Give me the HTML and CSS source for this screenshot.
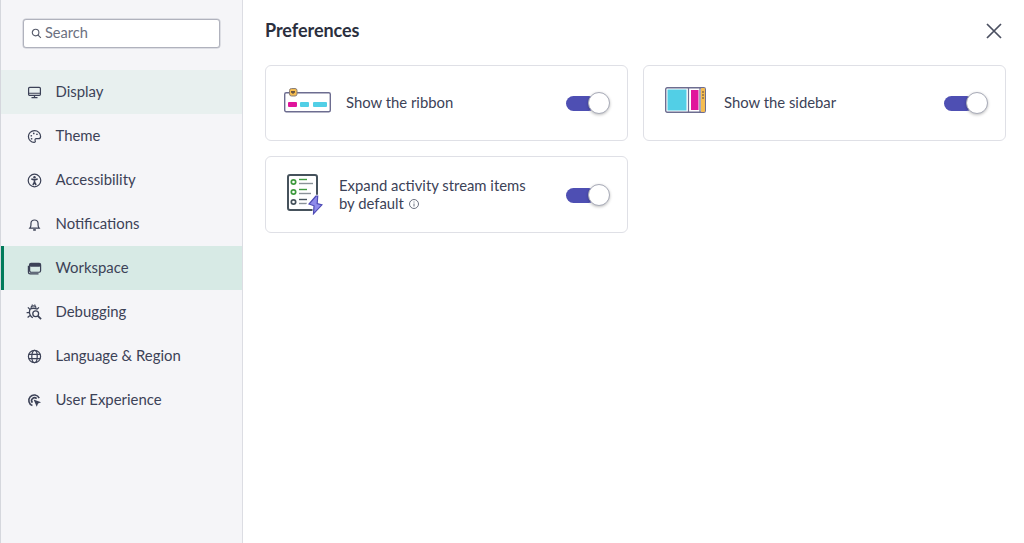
FILE: index.html
```html
<!DOCTYPE html>
<html lang="en">
<head>
    <meta charset="UTF-8">
    <meta name="viewport" content="width=device-width, initial-scale=1.0">
    <title>Preferences</title>
    <link rel="stylesheet" href="styles.css">
</head>
<body>
    <div class="sidebar">
        <div class="search-wrap">
            <div class="search">
                <svg class="search-icon" viewBox="0 0 12 12"><circle cx="5" cy="5" r="3.6"/><path d="M7.7 7.7 10.8 10.8"/></svg>
                <span>Search</span>
            </div>
        </div>
        <div class="nav">
            <div class="nav-item hovered">
                <svg class="nav-icon" viewBox="0 0 16 16"><rect x="1.7" y="2.5" width="12.6" height="8.5" rx="1.2"/><path d="M1.7 8.8h12.6M8 11v2.5M4.8 13.500h6.400"/></svg>
                <span>Display</span>
            </div>
            <div class="nav-item">
                <svg class="nav-icon" viewBox="0 0 16 16"><path d="M8 1.800c-3.600 0-6.500 2.700-6.500 6.200s2.900 6.200 6 6.200c1.300 0 1.700-1 1.200-1.900-.5-1 0-2 1.200-2h2.200c1.400 0 2.400-1 2.400-2.400 0-3.400-2.900-6.100-6.500-6.100z"/><circle class="dot" cx="4.600" cy="7.200" r=".9"/><circle class="dot" cx="7.200" cy="4.700" r=".9"/><circle class="dot" cx="10.600" cy="5.600" r=".9"/><circle class="dot" cx="4.900" cy="10.400" r=".9"/></svg>
                <span>Theme</span>
            </div>
            <div class="nav-item">
                <svg class="nav-icon" viewBox="0 0 16 16"><circle cx="8" cy="8" r="6.700"/><circle class="dot" cx="8" cy="4.500" r="1.300"/><path class="thick" d="M4.600 6.500 8 7.300l3.400-.8M8 7.300v2.500M8 9.800l-1.700 3M8 9.800l1.700 3"/></svg>
                <span>Accessibility</span>
            </div>
            <div class="nav-item">
                <svg class="nav-icon" viewBox="0 0 16 16"><path d="M3 11.800c.8-1 1.200-1.800 1.200-3.300V7a3.800 3.800 0 0 1 7.600 0v1.500c0 1.500.4 2.300 1.200 3.300z"/><path class="thick" d="M6.600 13.800h2.800"/></svg>
                <span>Notifications</span>
            </div>
            <div class="nav-item active">
                <svg class="nav-icon" viewBox="0 0 16 16"><rect class="solid" x="2.800" y="2.500" width="11.700" height="3.500" rx="1.200"/><rect x="2.800" y="2.500" width="11.700" height="9.500" rx="1.500"/><path d="M1.500 5v7c0 1 .8 1.800 1.800 1.800h9"/></svg>
                <span>Workspace</span>
            </div>
            <div class="nav-item">
                <svg class="nav-icon wide" viewBox="0 0 16 16"><path d="M4.800 3.600a3 3 0 0 1 5.400 0"/><path d="M3.900 5.200c1.800-1.300 5.400-1.300 7.200 0M3.900 5.200c-.9 2.900-.5 6.400 2.900 8.600"/><path d="M3.900 5.400 1.900 3.400M3.300 8.600H.6M3.900 11.400l-2.300 2"/><path d="M11.100 5.200l1.800-1.800M6.500 1.700 5.900.7M8.600 1.700l.6-1"/><circle cx="9.700" cy="9.700" r="2.900"/><path class="thick" d="M11.800 11.800l3.300 3.300"/></svg>
                <span>Debugging</span>
            </div>
            <div class="nav-item">
                <svg class="nav-icon" viewBox="0 0 16 16"><circle cx="8" cy="8" r="6.500"/><ellipse cx="8" cy="8" rx="2.900" ry="6.500"/><path d="M1.900 5.800h12.200M1.900 10.200h12.200"/></svg>
                <span>Language &amp; Region</span>
            </div>
            <div class="nav-item">
                <svg class="nav-icon heavy" viewBox="0 0 16 16"><path d="M5.800 13.400A5.800 5.800 0 1 1 13 5.500"/><path d="M5.800 10.300A3.100 3.100 0 1 1 10.300 6"/><path class="solid" d="M7 7l8 2.800-3.200 1.500-1.400 3.300z"/></svg>
                <span>User Experience</span>
            </div>
        </div>
    </div>

    <div class="main">
        <div class="header">
            <h1>Preferences</h1>
            <svg class="close" viewBox="0 0 16 16"><path d="M1 1l14 14M15 1 1 15"/></svg>
        </div>
        <div class="cards">
            <div class="card">
                <svg class="pic" width="47" height="30" viewBox="0 0 47 30">
                    <rect x="0.700" y="4.700" width="45.600" height="19" rx="1.500" fill="#fff" stroke="#6d6d90" stroke-width="1.400"/>
                    <rect x="4" y="14" width="9" height="5" rx="1" fill="#e0159b"/>
                    <rect x="16" y="14" width="9" height="5" rx="1" fill="#52cfe6"/>
                    <rect x="29" y="14" width="14" height="5" rx="1" fill="#52cfe6"/>
                    <rect x="5.500" y="0.500" width="7.500" height="7.500" rx="2" fill="#f6bd50" stroke="#8a7f78"/>
                    <path d="M7 3h4v1.500l-2 1.500-2-1.500z" fill="#6a5540"/>
                </svg>
                <span class="label">Show the ribbon</span>
                <div class="toggle"><div class="knob"></div></div>
            </div>
            <div class="card sidebar-card">
                <svg class="pic" width="41" height="32" viewBox="0 0 41 32">
                    <rect x="0.700" y="0.700" width="39.600" height="24.600" rx="1.500" fill="#fff" stroke="#6d6d90" stroke-width="1.400"/>
                    <rect x="2.500" y="2.500" width="19" height="21" fill="#52cfe6"/>
                    <path d="M23.500 1v24M35 1v24" stroke="#6d6d90" stroke-width="1.200"/>
                    <rect x="26" y="3" width="7.500" height="20" fill="#e0159b"/>
                    <rect x="36" y="1" width="4" height="24" rx="1" fill="#f6bd50"/>
                    <path d="M37 5h2M37 8h2M37 11h2" stroke="#5a4a40" stroke-width="1.200"/>
                </svg>
                <span class="label">Show the sidebar</span>
                <div class="toggle"><div class="knob"></div></div>
            </div>
            <div class="card compact">
                <svg class="pic" width="36" height="41" viewBox="0 0 36 41">
                    <rect x="1" y="1" width="29" height="35" rx="2" fill="#fff" stroke="#46525c" stroke-width="2"/>
                    <circle cx="6.500" cy="8" r="2.200" fill="none" stroke="#3f9a3f" stroke-width="1.700"/>
                    <path d="M12 5.500h8" stroke="#3f9a3f" stroke-width="1.400"/>
                    <path d="M12 9.500h14" stroke="#8a9298" stroke-width="1.400"/>
                    <circle cx="6.500" cy="18" r="2.200" fill="none" stroke="#3f9a3f" stroke-width="1.700"/>
                    <path d="M12 15.500h8" stroke="#3f9a3f" stroke-width="1.400"/>
                    <path d="M12 19.500h12" stroke="#8a9298" stroke-width="1.400"/>
                    <circle cx="6.500" cy="28" r="2.200" fill="none" stroke="#46525c" stroke-width="1.700"/>
                    <path d="M12 25.500h8" stroke="#46525c" stroke-width="1.400"/>
                    <path d="M12 29.500h8" stroke="#8a9298" stroke-width="1.400"/>
                    <path d="M29 22 21 30l6 2-.5 8.500 9-9.500-5-1.500.5-7.500z" fill="#fff" stroke="#fff" stroke-width="2.500"/>
                    <path d="M29 22 22 30l5 1.800-.5 8 8.500-9-4.800-1.300.5-7.500z" fill="#8f8bea" stroke="#4e4bb5" stroke-width="1.200"/>
                </svg>
                <span class="label">Expand activity stream items<br>by default
                    <svg class="info" viewBox="0 0 12 12"><circle cx="6" cy="6" r="4.500"/><path d="M6 5.500v3M6 3.500v1"/></svg>
                </span>
                <div class="toggle"><div class="knob"></div></div>
            </div>
        </div>
    </div>
</body>
</html>
```

FILE: styles.css
```css
body {
    margin: 0;
    height: 543px;
    display: flex;
    overflow: hidden;
    background: #fff;
    font-family: 'Lato', sans-serif;
    color: #3c4257;
}

.sidebar {
    width: 241px;
    flex-shrink: 0;
    background: #f5f5f8;
    border-left: 1px solid #d5d7dd;
    border-right: 1px solid #dcdde3;
}

.search-wrap {
    padding: 19px 22px 22px 22px;
}

.search {
    height: 27px;
    background: #fff;
    border: 1px solid #b0b2bd;
    border-radius: 3px;
    box-shadow: 0 0 0 0.5px #c6c8d0;
    display: flex;
    align-items: center;
    gap: 3px;
    padding-left: 7px;
    font-size: 14.600px;
    color: #6b7080;
}

.search span {
    padding-bottom: 2px;
}

.search-icon {
    width: 11px;
    height: 11px;
    fill: none;
    stroke: #555a6a;
    stroke-width: 1.200;
}

.nav-item {
    height: 44px;
    display: flex;
    align-items: center;
    padding-left: 26px;
    gap: 13.500px;
    font-size: 14.900px;
}

.nav-item span {
    padding-bottom: 2px;
}

.nav-item.hovered {
    background: #e8f0ef;
}

.nav-item.active {
    background: #d7eae5;
    border-left: 3px solid #007a5a;
    padding-left: 23px;
}

.nav-icon {
    width: 15px;
    height: 15px;
    fill: none;
    stroke: #3c4257;
    stroke-width: 1.300;
}

.nav-icon.heavy {
    stroke-width: 1.700;
}

.nav-icon.wide {
    width: 16px;
    height: 16px;
    margin-left: -1px;
}

.nav-icon .dot,
.nav-icon .solid {
    fill: #3c4257;
    stroke: none;
}

.nav-icon .thick {
    stroke-width: 1.700;
}

.main {
    flex: 1;
    padding: 0 18px 0 22px;
}

.header {
    height: 65px;
    display: flex;
    justify-content: space-between;
    align-items: center;
    padding-bottom: 4px;
    box-sizing: border-box;
}

h1 {
    margin: 0;
    padding-bottom: 2px;
    font-size: 18px;
    font-weight: 700;
    letter-spacing: -0.05px;
    color: #2b2f3e;
}

.close {
    width: 16px;
    height: 16px;
    margin-right: 4px;
    fill: none;
    stroke: #4a4f60;
    stroke-width: 1.700;
}

.cards {
    display: grid;
    grid-template-columns: 363px 363px;
    grid-template-rows: 76px 77px;
    gap: 15px;
}

.card {
    box-sizing: border-box;
    border: 1px solid #dfe0e6;
    border-radius: 6px;
    display: flex;
    align-items: center;
    padding-left: 18px;
    font-size: 14.850px;
}

.card .pic {
    flex-shrink: 0;
    margin-right: 15px;
}

.card.sidebar-card {
    padding-left: 21px;
}

.card.sidebar-card .pic {
    margin-right: 18px;
}

.card.compact {
    padding-left: 21px;
}

.card.compact .pic {
    margin-right: 16px;
}

.card.compact .toggle {
    margin-top: 1px;
}

.label {
    flex: 1;
    line-height: 18px;
    padding-bottom: 2px;
}

.info {
    width: 12px;
    height: 12px;
    vertical-align: -1px;
    fill: none;
    stroke: #6b7080;
    stroke-width: 1;
}

.toggle {
    width: 30px;
    height: 15px;
    background: #4e4fb3;
    border-radius: 8px;
    margin-right: 31px;
    position: relative;
    flex-shrink: 0;
}

.knob {
    position: absolute;
    left: 22px;
    top: -4px;
    width: 20px;
    height: 20px;
    background: #fff;
    border: 1px solid #a8abb8;
    border-radius: 50%;
    box-shadow: 0 1px 3px rgba(0, 0, 0, 0.25);
}
```
